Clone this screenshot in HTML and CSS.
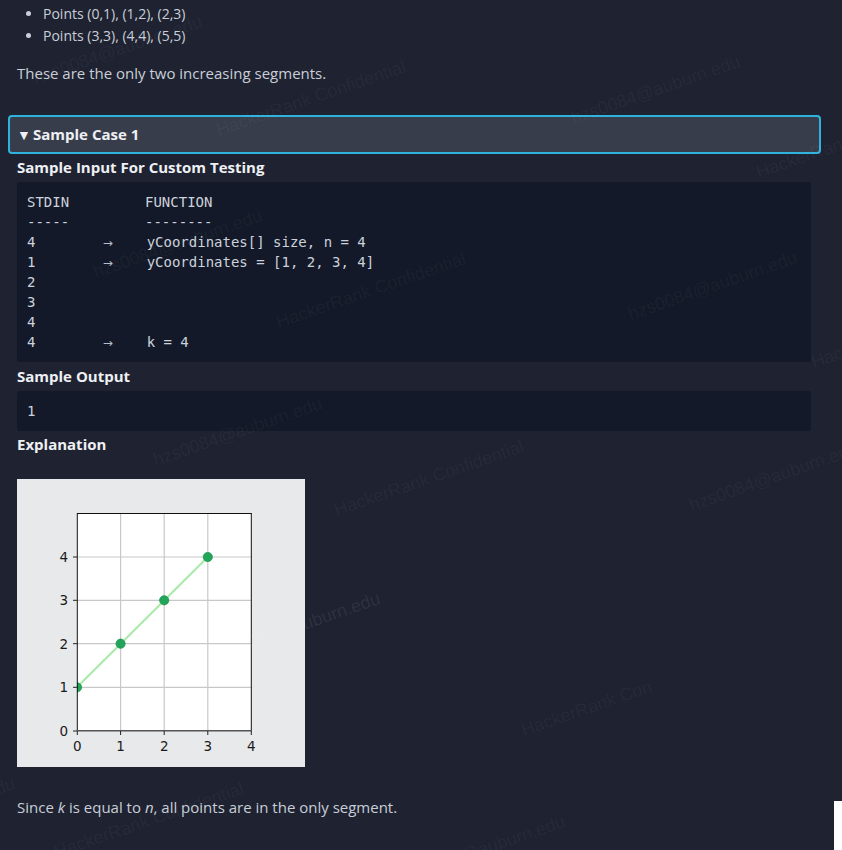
FILE: index.html
```html
<!DOCTYPE html>
<html lang="en">
<head>
<meta charset="utf-8">
<title>Sample Case</title>
<link rel="stylesheet" href="styles.css">
</head>
<body>
<main class="page">
  <ul class="points">
    <li>Points (0,1), (1,2), (2,3)</li>
    <li>Points (3,3), (4,4), (5,5)</li>
  </ul>
  <p class="text">These are the only two increasing segments.</p>

  <section class="case">
    <div class="case-head"><span class="caret">▼</span>Sample Case 1</div>
    <h4 class="sub">Sample Input For Custom Testing</h4>
    <pre class="code">STDIN         FUNCTION
-----         --------
4        <span class="arr">→</span>    yCoordinates[] size, n = 4
1        <span class="arr">→</span>    yCoordinates = [1, 2, 3, 4]
2
3
4
4        <span class="arr">→</span>    k = 4</pre>
    <h4 class="sub out-head">Sample Output</h4>
    <pre class="code">1</pre>
    <h4 class="sub exp-head">Explanation</h4>
    <div class="figure">
      <svg width="288" height="288" viewBox="0 0 288 288" xmlns="http://www.w3.org/2000/svg">
        <rect x="0" y="0" width="288" height="288" fill="#e8e9eb"/>
        <rect x="60" y="34" width="174.5" height="218" fill="#ffffff"/>
        <g stroke="#c8c8c8" stroke-width="1.2">
          <line x1="103.6" y1="34" x2="103.6" y2="252"/>
          <line x1="147.2" y1="34" x2="147.2" y2="252"/>
          <line x1="190.8" y1="34" x2="190.8" y2="252"/>
          <line x1="60" y1="78" x2="234.5" y2="78"/>
          <line x1="60" y1="121.3" x2="234.5" y2="121.3"/>
          <line x1="60" y1="164.7" x2="234.5" y2="164.7"/>
          <line x1="60" y1="208.3" x2="234.5" y2="208.3"/>
        </g>
        <line x1="60" y1="208.3" x2="190.8" y2="78" stroke="#a8eaa8" stroke-width="2"/>
        <clipPath id="ax"><rect x="60" y="34" width="174.5" height="218"/></clipPath>
        <g fill="#22a55b" stroke="#1f9550" stroke-width="0.8" clip-path="url(#ax)">
          <circle cx="60" cy="208.3" r="4.6"/>
          <circle cx="103.6" cy="164.7" r="4.6"/>
          <circle cx="147.2" cy="121.3" r="4.6"/>
          <circle cx="190.8" cy="78" r="4.6"/>
        </g>
        <g stroke="#111" stroke-width="1" fill="none">
          <line x1="60.3" y1="34" x2="60.3" y2="252"/>
          <line x1="60" y1="34.5" x2="234.5" y2="34.5"/>
          <line x1="234.3" y1="34" x2="234.3" y2="252"/>
        </g>
        <line x1="60" y1="251.7" x2="234.8" y2="251.7" stroke="#555" stroke-width="1.6"/>
        <g stroke="#222" stroke-width="1">
          <line x1="56" y1="78" x2="60" y2="78"/>
          <line x1="56" y1="121.3" x2="60" y2="121.3"/>
          <line x1="56" y1="164.7" x2="60" y2="164.7"/>
          <line x1="56" y1="208.3" x2="60" y2="208.3"/>
          <line x1="56" y1="252" x2="60" y2="252"/>
          <line x1="60.3" y1="252" x2="60.3" y2="256"/>
          <line x1="103.6" y1="252" x2="103.6" y2="256"/>
          <line x1="147.2" y1="252" x2="147.2" y2="256"/>
          <line x1="190.8" y1="252" x2="190.8" y2="256"/>
          <line x1="234.3" y1="252" x2="234.3" y2="256"/>
        </g>
        <g class="ticklbl" text-anchor="end">
          <text x="51" y="83">4</text>
          <text x="51" y="126.3">3</text>
          <text x="51" y="169.7">2</text>
          <text x="51" y="213.3">1</text>
          <text x="51" y="257">0</text>
        </g>
        <g class="ticklbl" text-anchor="middle">
          <text x="60.3" y="272">0</text>
          <text x="103.6" y="272">1</text>
          <text x="147.2" y="272">2</text>
          <text x="190.8" y="272">3</text>
          <text x="234.3" y="272">4</text>
        </g>
      </svg>
    </div>
    <p class="text">Since <em>k</em> is equal to <em>n</em>, all points are in the only segment.</p>
  </section>

  <div class="watermarks" aria-hidden="true">
    <span class="wm w1">hzs0084@auburn.edu</span>
    <span class="wm w2">HackerRank Confidential</span>
    <span class="wm w3">hzs0084@auburn.edu</span>
    <span class="wm w4">HackerRank Confidential</span>
    <span class="wm w5">hzs0084@auburn.edu</span>
    <span class="wm w6">HackerRank Confidential</span>
    <span class="wm w7">hzs0084@auburn.edu</span>
    <span class="wm w8">HackerRank</span>
    <span class="wm w9">hzs0084@auburn.edu</span>
    <span class="wm w10">HackerRank Confidential</span>
    <span class="wm w11">hzs0084@auburn.edu</span>
    <span class="wm w12">hzs0084@auburn.edu</span>
    <span class="wm w13">HackerRank Con</span>
    <span class="wm w14">hzs0084@auburn.edu</span>
    <span class="wm w15">HackerRank Confidential</span>
    <span class="wm w16">hzs0084@auburn.edu</span>
  </div>
  <div class="corner"></div>
</main>
</body>
</html>
```

FILE: styles.css
```css
html, body {
  margin: 0;
  padding: 0;
  background: #1f2331;
}

body {
  width: 842px;
  height: 850px;
  overflow: hidden;
  font-family: "Open Sans", "Liberation Sans", sans-serif;
  color: #c9ced8;
}

.page {
  position: relative;
  width: 794px;
  height: 850px;
  margin-left: 17px;
}

.points {
  margin: 0;
  padding: 3px 0 0 26px;
  font-size: 14px;
  line-height: 22px;
}

.text {
  margin: 15px 0 0;
  font-size: 15px;
  line-height: 22px;
}

.case {
  margin-top: 31px;
}

.case-head {
  margin: 0 -10px 0 -9px;
  height: 35px;
  padding: 0 0 0 7px;
  border: 2px solid #2fb3de;
  border-radius: 4px;
  background: #383d4b;
  color: #eef0f4;
  font-weight: 700;
  font-size: 15px;
  line-height: 35px;
}

.caret {
  display: inline-block;
  width: 16px;
  font-size: 14px;
  line-height: 1;
}

.sub {
  margin: 2px 0 4px;
  font-size: 15px;
  line-height: 22px;
  font-weight: 700;
  color: #eef0f4;
}

.sub.out-head {
  margin-top: 3px;
}

.sub.exp-head {
  margin-top: 2px;
}

.code {
  margin: 0;
  padding: 10px;
  background: #131928;
  border-radius: 3px;
  font-family: "DejaVu Sans Mono", "Liberation Mono", monospace;
  font-size: 14px;
  line-height: 20px;
  color: #ccd2dc;
}

.arr {
  font-family: "DejaVu Sans", sans-serif;
  font-size: 12px;
  line-height: 1;
  color: #b8bec9;
}

.figure {
  margin-top: 24px;
  width: 288px;
  height: 288px;
}

.figure svg {
  display: block;
}

.ticklbl {
  font-family: "DejaVu Sans", sans-serif;
  font-size: 13.5px;
  fill: #1a1a1a;
}

.case .text {
  margin-top: 29px;
}

.text em {
  font-style: italic;
}

.watermarks {
  position: absolute;
  left: -17px;
  top: 0;
  width: 842px;
  height: 850px;
  overflow: hidden;
  pointer-events: none;
}

.wm {
  position: absolute;
  font-family: "Liberation Sans", Arial, sans-serif;
  font-size: 18px;
  line-height: 20px;
  color: rgba(255, 255, 255, 0.045);
  transform: rotate(-19deg);
  transform-origin: left bottom;
  white-space: nowrap;
}

.w1 { left: 37px; top: 68px; }
.w2 { left: 220px; top: 120px; }
.w3 { left: 575px; top: 108px; }
.w4 { left: 760px; top: 162px; }
.w5 { left: 97px; top: 262px; }
.w6 { left: 280px; top: 312px; }
.w7 { left: 632px; top: 304px; }
.w8 { left: 815px; top: 352px; }
.w9 { left: 157px; top: 450px; }
.w10 { left: 338px; top: 500px; }
.w11 { left: 693px; top: 495px; }
.w12 { left: 215px; top: 645px; color: rgba(255, 255, 255, 0.08); }
.w13 { left: 525px; top: 720px; }
.w14 { left: -150px; top: 830px; }
.w15 { left: 58px; top: 842px; }
.w16 { left: 400px; top: 868px; }

.corner {
  position: absolute;
  left: 817px;
  top: 801px;
  width: 8px;
  height: 49px;
  background: #ffffff;
}
```
